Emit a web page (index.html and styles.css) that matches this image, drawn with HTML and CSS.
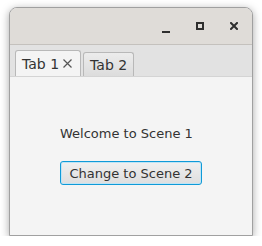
FILE: index.html
```html
<!DOCTYPE html>
<html lang="en">
<head>
    <meta charset="UTF-8">
    <title>Scenes</title>
    <link rel="stylesheet" href="styles.css">
</head>
<body>

<div class="window">
    <!-- Title bar -->
    <div class="titlebar">
        <span class="ctl ctl-min"></span>
        <span class="ctl ctl-max"></span>
        <span class="ctl ctl-close">
            <svg width="8" height="8" viewBox="0 0 8 8"><path d="M1 1L7 7M7 1L1 7" stroke="#2e2e2e" stroke-width="2" stroke-linecap="square"/></svg>
        </span>
    </div>

    <!-- Tabs -->
    <div class="tab-header">
        <div class="tab selected">Tab 1
            <svg class="tab-close" width="9" height="9" viewBox="0 0 9 9"><path d="M0.5 0.5L8.5 8.5M8.5 0.5L0.5 8.5" stroke="#555" stroke-width="1.2"/></svg>
        </div>
        <div class="tab">Tab 2</div>
    </div>

    <!-- Scene content -->
    <div class="content">
        <p class="welcome">Welcome to Scene 1</p>
        <button class="btn">Change to Scene 2</button>
    </div>
</div>

</body>
</html>
```

FILE: styles.css
```css
body {
    margin: 0;
    background-color: #ffffff;
    font-family: "DejaVu Sans", sans-serif;
    font-size: 13px;
    color: #333333;
}

.window {
    margin: 7px 0 0 9px;
    width: 242px;
    height: 227px;
    border: 1px solid #a0a0a0;
    border-radius: 8px 8px 0 0;
    background-color: #f4f4f4;
    box-shadow: 0 2px 8px rgba(0, 0, 0, 0.35);
    overflow: hidden;
    display: flex;
    flex-direction: column;
}

/* Title bar */
.titlebar {
    height: 36px;
    background-color: #dfdcd8;
    border-bottom: 1px solid #c4c1bd;
    display: flex;
    align-items: center;
    justify-content: flex-end;
    padding-right: 14px;
    gap: 26px;
}

.ctl {
    width: 8px;
    height: 8px;
    box-sizing: border-box;
    display: block;
}

.ctl-min {
    border-bottom: 2px solid #2e2e2e;
    transform: translateY(3px);
}

.ctl-max {
    border: 2px solid #2e2e2e;
}

.ctl-close svg {
    display: block;
}

/* Tab header */
.tab-header {
    height: 31px;
    background-color: #e2e2e2;
    display: flex;
    align-items: flex-end;
    padding-left: 5px;
    gap: 2px;
    border-bottom: 1px solid #d4d4d4;
}

.tab {
    height: 23px;
    padding: 0 6px;
    display: flex;
    align-items: center;
    font-size: 14px;
    border: 1px solid #b8b8b8;
    border-bottom: none;
    border-radius: 3px 3px 0 0;
    background: linear-gradient(#ececec, #dcdcdc);
}

.tab.selected {
    height: 25px;
    background: #f4f4f4;
    padding-right: 8px;
}

.tab-close {
    margin-left: 4px;
}

/* Content */
.content {
    flex: 1;
    padding-left: 50px;
}

.welcome {
    margin: 49px 0 0 0;
}

.btn {
    margin-top: 20px;
    height: 24px;
    width: 142px;
    font-family: "DejaVu Sans", sans-serif;
    font-size: 13px;
    color: #333333;
    border: 1px solid #0f9ad8;
    border-radius: 3px;
    background: linear-gradient(#f0f0f0, #dedede);
    box-shadow: inset 0 0 0 1px #bfe4f5;
    padding: 0;
}
```
